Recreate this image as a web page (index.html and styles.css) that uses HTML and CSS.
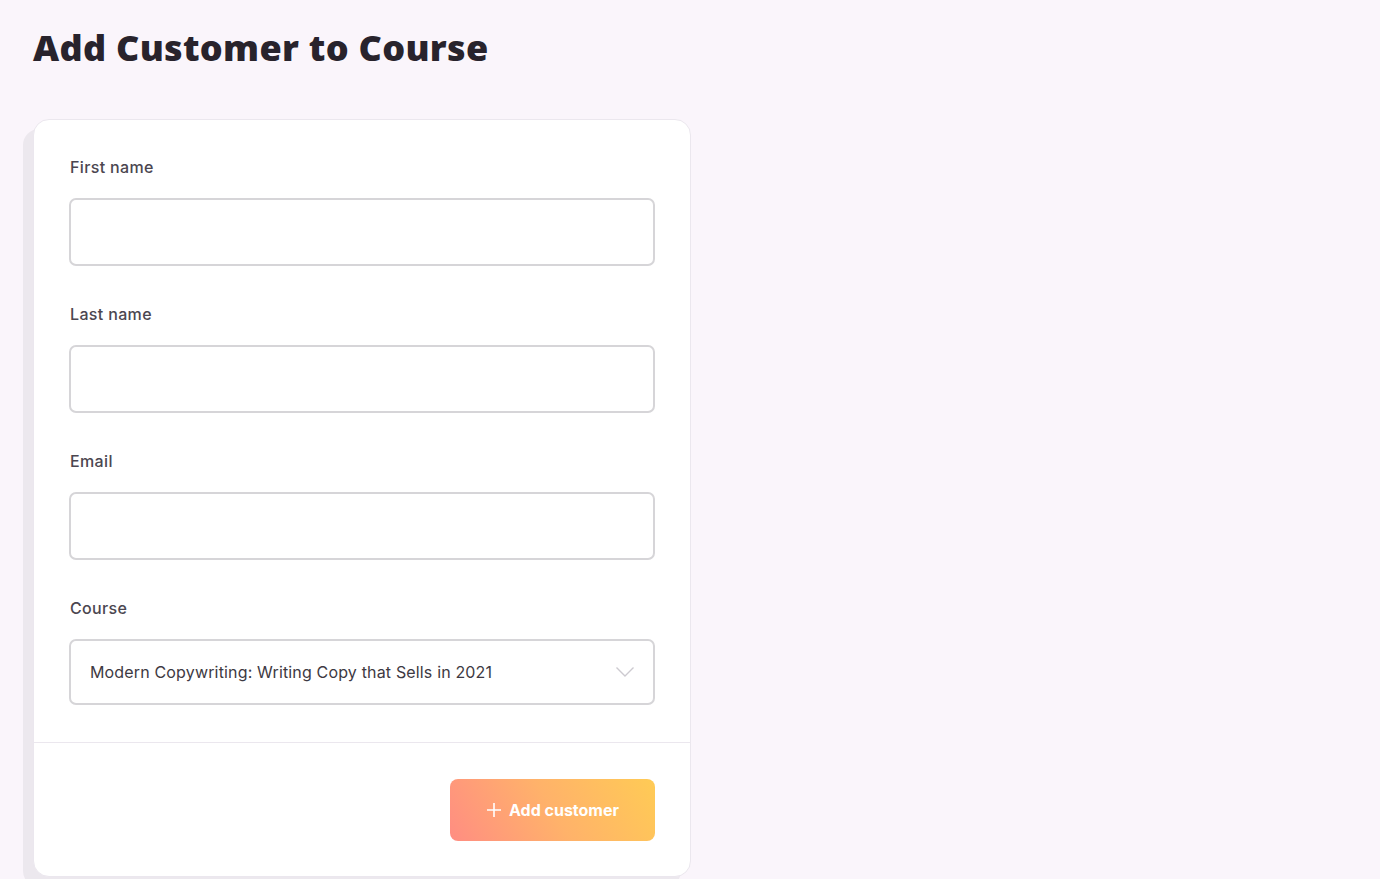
FILE: index.html
```html
<!DOCTYPE html>
<html>
<head>
<meta charset="utf-8">
<link rel="stylesheet" href="styles.css">
</head>
<body>
<main class="page">
  <h1 class="title">Add Customer to Course</h1>
  <section class="card">
    <div class="card-body">
      <div class="field">
        <label class="label">First name</label>
        <input class="input" type="text">
      </div>
      <div class="field">
        <label class="label">Last name</label>
        <input class="input" type="text">
      </div>
      <div class="field">
        <label class="label">Email</label>
        <input class="input" type="text">
      </div>
      <div class="field">
        <label class="label">Course</label>
        <div class="select">
          <span class="select-text">Modern Copywriting: Writing Copy that Sells in 2021</span>
          <svg class="chevron" width="20" height="12" viewBox="0 0 20 12"><path d="M1.5 1.5 L10 10 L18.5 1.5" fill="none" stroke="#cdcad0" stroke-width="1.4"/></svg>
        </div>
      </div>
    </div>
    <div class="card-footer">
      <button class="btn">
        <svg class="plus" width="16" height="16" viewBox="0 0 16 16"><path d="M8 1 V15 M1 8 H15" stroke="#fff" stroke-width="1.6" fill="none"/></svg>
        <span>Add customer</span>
      </button>
    </div>
  </section>
</main>
</body>
</html>
```

FILE: styles.css
```css
* { box-sizing: border-box; }
html, body { margin: 0; padding: 0; }
body {
  background: #faf5fb;
  font-family: "Inter", "Liberation Sans", sans-serif;
  color: #2a2530;
  height: 879px;
  overflow: hidden;
}
.page {
  padding: 26px 0 0 33px;
}
.title {
  margin: 0;
  font-family: "Open Sans", "Inter", sans-serif;
  font-weight: 800;
  font-size: 36px;
  line-height: 44px;
  color: #28232c;
  letter-spacing: 0.3px;
}
.card {
  margin-top: 49px;
  width: 658px;
  background: #fff;
  border: 1px solid #ebe7ee;
  border-radius: 16px;
  box-shadow: -10px 10px 0 0 #ece8ee;
}
.card-body {
  padding: 36px 35px 37px 35px;
  display: flex;
  flex-direction: column;
  gap: 37px;
}
.field {
  display: flex;
  flex-direction: column;
  gap: 20px;
}
.label {
  font-size: 16px;
  line-height: 22px;
  font-weight: 500;
  color: #4b4650;
  letter-spacing: 0.35px;
  padding-left: 1px;
}
.input {
  height: 68px;
  width: 586px;
  border: 2px solid #d6d5d8;
  border-radius: 7px;
  background: #fff;
  outline: none;
}
.select {
  height: 66px;
  border: 2px solid #d6d5d8;
  border-radius: 7px;
  display: flex;
  align-items: center;
  justify-content: space-between;
  padding: 0 18px 0 19px;
}
.select-text {
  font-size: 16px;
  color: #3d3942;
  letter-spacing: 0.16px;
}
.card-footer {
  border-top: 1px solid #ebe7ee;
  padding: 36px 35px 35px;
  display: flex;
  justify-content: flex-end;
}
.btn {
  width: 205px;
  height: 62px;
  border: none;
  border-radius: 8px;
  background: linear-gradient(60deg, #ff8d82 0%, #ffb26a 50%, #ffcb55 100%);
  color: #fff;
  font-family: "Inter", sans-serif;
  font-weight: 700;
  font-size: 16px;
  display: flex;
  align-items: center;
  justify-content: center;
  gap: 7px;
  letter-spacing: 0;
}
```
